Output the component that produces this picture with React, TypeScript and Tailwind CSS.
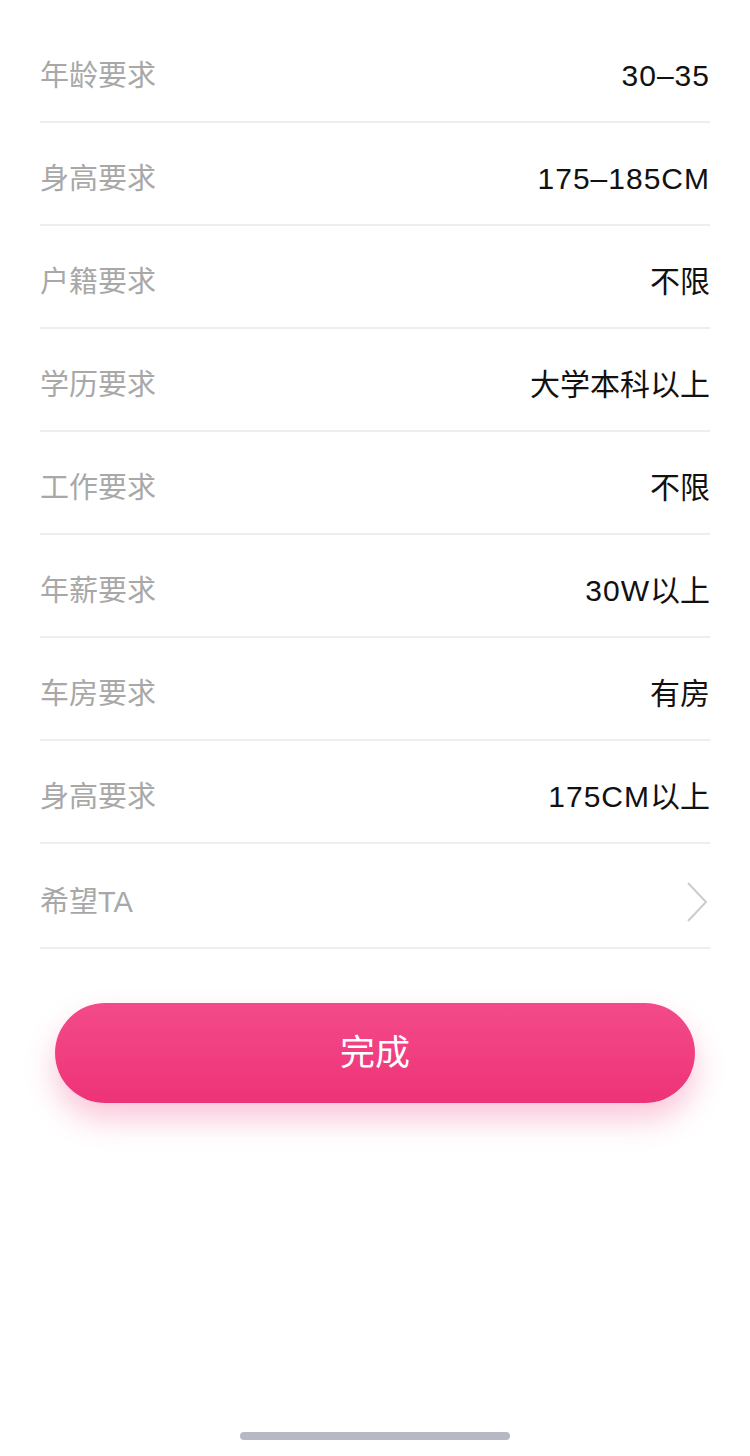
const rows = [
  { label: "年龄要求", value: "30–35" },
  { label: "身高要求", value: "175–185CM" },
  { label: "户籍要求", value: "不限" },
  { label: "学历要求", value: "大学本科以上" },
  { label: "工作要求", value: "不限" },
  { label: "年薪要求", value: "30W以上" },
  { label: "车房要求", value: "有房" },
  { label: "身高要求", value: "175CM以上" },
];

// latin runs get a little letter spacing, CJK runs none
function Value({ text }: { text: string }) {
  const parts = text.split(/([\u4e00-\u9fff]+)/).filter(Boolean);
  return (
    <span className="text-[30px] leading-[40px] text-[#111111]">
      {parts.map((p, i) =>
        /[\u4e00-\u9fff]/.test(p) ? (
          <span key={i}>{p}</span>
        ) : (
          <span key={i} className="tracking-[1px]">
            {p}
          </span>
        )
      )}
    </span>
  );
}

export default function App() {
  return (
    <div
      className="relative flex min-h-[1456px] w-[750px] flex-col bg-white"
      style={{ fontFamily: '"Liberation Sans", "Noto Sans CJK SC", sans-serif' }}
    >
      <div className="mx-[40px] mt-[20px]">
        {rows.map((row, i) => (
          <div
            key={i}
            className="flex h-[103px] items-center justify-between border-b-2 border-[#eeeeee] pt-[11px]"
          >
            <span className="text-[29px] leading-[40px] text-[#a8a8a8]">{row.label}</span>
            <Value text={row.value} />
          </div>
        ))}
        <div className="flex h-[105px] items-center justify-between border-b-2 border-[#eeeeee] pt-[13px]">
          <span className="text-[29px] leading-[40px] text-[#a8a8a8]">希望TA</span>
          <svg width="24" height="40" viewBox="0 0 24 40" className="mr-[1px]">
            <path d="M3 1 L21 20 L3 39" fill="none" stroke="#cccccc" strokeWidth="2" />
          </svg>
        </div>
      </div>

      <div className="mt-[54px] px-[55px]">
        <button className="flex h-[100px] w-full items-center justify-center rounded-full bg-gradient-to-b from-[#f34a8a] to-[#ee3277] text-[35px] text-white shadow-[0_16px_30px_rgba(238,50,119,0.28)]">
          完成
        </button>
      </div>

      <div className="absolute bottom-[16px] left-[240px] h-[8px] w-[270px] rounded-full bg-[#b6b8c4]" />
    </div>
  );
}
